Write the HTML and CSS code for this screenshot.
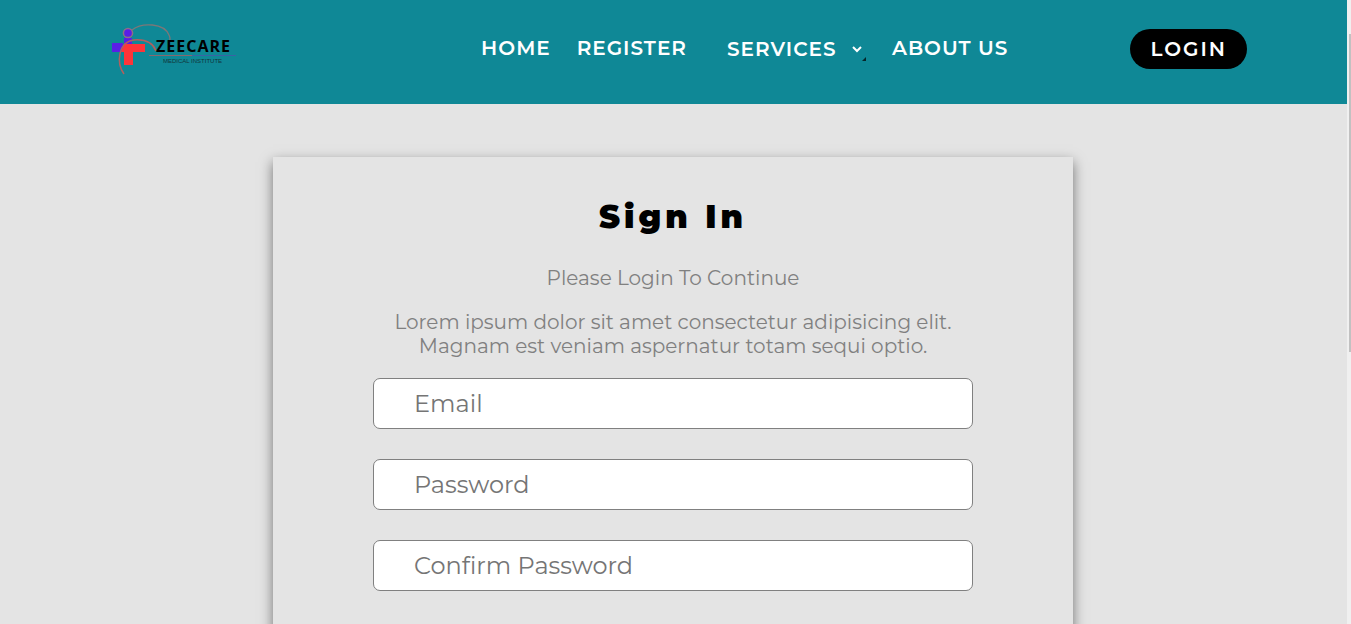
FILE: index.html
```html
<!DOCTYPE html>
<html lang="en">
<head>
<meta charset="utf-8">
<meta name="viewport" content="width=device-width, initial-scale=1">
<title>ZeeCare Medical Institute</title>
<link rel="stylesheet" href="styles.css">
</head>
<body>
<div class="page">
  <header class="header">
    <a class="logo" href="#" aria-label="ZeeCare Medical Institute">
      <svg class="logo-art" viewBox="0 0 145 65" width="145" height="65">
        <path d="M12 28h11v9H12z" fill="#5a1ee6"/>
        <path d="M24 23h8v6h-8z" fill="#5a1ee6"/>
        <path d="M24 29h21v8H33v13h-9V37h-3z" fill="#ff3438"/>
        <circle cx="28" cy="18" r="4.600" fill="#5a1ee6" stroke="#8b6f86" stroke-width="1.500"/>
        <path d="M32 15C42 7 64 8 69 20q2 4 0 7" fill="none" stroke="#7c7778" stroke-width="1.300"/>
        <path d="M24 59C16 48 18 27 34 25C46 24 53 28 56 36" fill="none" stroke="#b0605f" stroke-width="1.500"/>
        <path d="M49 40.500h43" stroke="#87676f" stroke-width="1"/>
        <path d="M92 40.500h44" stroke="#3b62a4" stroke-width="1"/>
        <text class="logo-name" x="56" y="37">ZEECARE</text>
        <text class="logo-tag" x="63" y="48">MEDICAL INSTITUTE</text>
      </svg>
    </a>
    <nav class="nav">
      <a class="nav-link" href="#">HOME</a>
      <a class="nav-link" href="#">REGISTER</a>
      <div class="nav-select">
        <select class="services" aria-label="Services">
          <option>SERVICES</option>
        </select>
        <svg class="chevron" viewBox="0 0 16 24" width="16" height="24" aria-hidden="true">
          <path d="M3 10l4 4 4-4" fill="none" stroke="#fff" stroke-width="2"/>
          <path d="M16 20v4h-4z" fill="#06262a"/>
        </svg>
      </div>
      <a class="nav-link" href="#">ABOUT US</a>
    </nav>
    <button class="login" type="button">LOGIN</button>
  </header>
  <main class="main">
    <form class="card">
      <h1 class="title">Sign In</h1>
      <p class="lead">Please Login To Continue</p>
      <p class="lead">Lorem ipsum dolor sit amet consectetur adipisicing elit.<br>Magnam est veniam aspernatur totam sequi optio.</p>
      <div class="fields">
        <input class="field" type="email" placeholder="Email" aria-label="Email">
        <input class="field" type="password" placeholder="Password" aria-label="Password">
        <input class="field" type="password" placeholder="Confirm Password" aria-label="Confirm Password">
      </div>
    </form>
  </main>
</div>
<div class="rail" aria-hidden="true"><div class="thumb"></div></div>
</body>
</html>
```
FILE: styles.css
```css
* {
  box-sizing: border-box;
}

body {
  margin: 0;
  height: 100vh;
  overflow: hidden;
  display: grid;
  grid-template-columns: 1fr 4px;
  background: #e4e4e4;
  color: #000;
  font-family: Montserrat, Inter, "Open Sans", sans-serif;
}

.page {
  min-width: 0;
  overflow: hidden;
}

.header {
  display: flex;
  align-items: center;
  height: 104px;
  padding: 0 100px;
  background: #0f8896;
}

.logo,
.logo-art {
  display: block;
}

.logo {
  margin-bottom: 9px;
}

.logo-name {
  font: 700 16px "Open Sans", sans-serif;
  letter-spacing: 1px;
}

.logo-tag {
  font: 400 6px "Liberation Sans", sans-serif;
  fill: #12353a;
}

.nav {
  display: flex;
  align-items: center;
  margin: 0 122px 8px auto;
}

.nav-link,
.services,
.login {
  font-family: inherit;
  font-size: 20px;
  line-height: 24px;
  font-weight: 600;
  letter-spacing: 1px;
  color: #fff;
  text-decoration: none;
}

.nav-link + .nav-link {
  margin-left: 26px;
}

.nav-select {
  display: flex;
  gap: 13px;
  margin: 2px 26px 0 40px;
}

.services {
  appearance: none;
  padding: 0;
  border: 0;
  background: transparent;
}

.login {
  height: 40px;
  padding: 0 20px;
  margin-bottom: 6px;
  border: 0;
  border-radius: 20px;
  background: #000;
  letter-spacing: 2px;
}

.main {
  padding: 53px 21px 52px 20px;
}

.card {
  max-width: 800px;
  margin: 0 auto;
  padding: 40px 100px 100px;
  box-shadow: 0 5px 12px rgba(0, 0, 0, 0.5);
  text-align: center;
}

.title {
  margin: 0 0 29px;
  font-size: 32px;
  line-height: 40px;
  font-weight: 900;
  letter-spacing: 4px;
}

.lead {
  margin: 0 0 20px;
  font-size: 20px;
  line-height: 24px;
  color: #808080;
}

.fields {
  display: grid;
  gap: 30px;
}

.field {
  width: 100%;
  height: 51px;
  padding: 0 40px;
  border: 1px solid #808080;
  border-radius: 7px;
  background: #fff;
  font-family: inherit;
  font-size: 24px;
  color: #000;
}

.field::placeholder {
  color: #757575;
}

.rail {
  padding: 34px 0 0 2px;
  background: #f0f0f0;
}

.thumb {
  height: 318px;
  background: #c1c1c1;
}
```
